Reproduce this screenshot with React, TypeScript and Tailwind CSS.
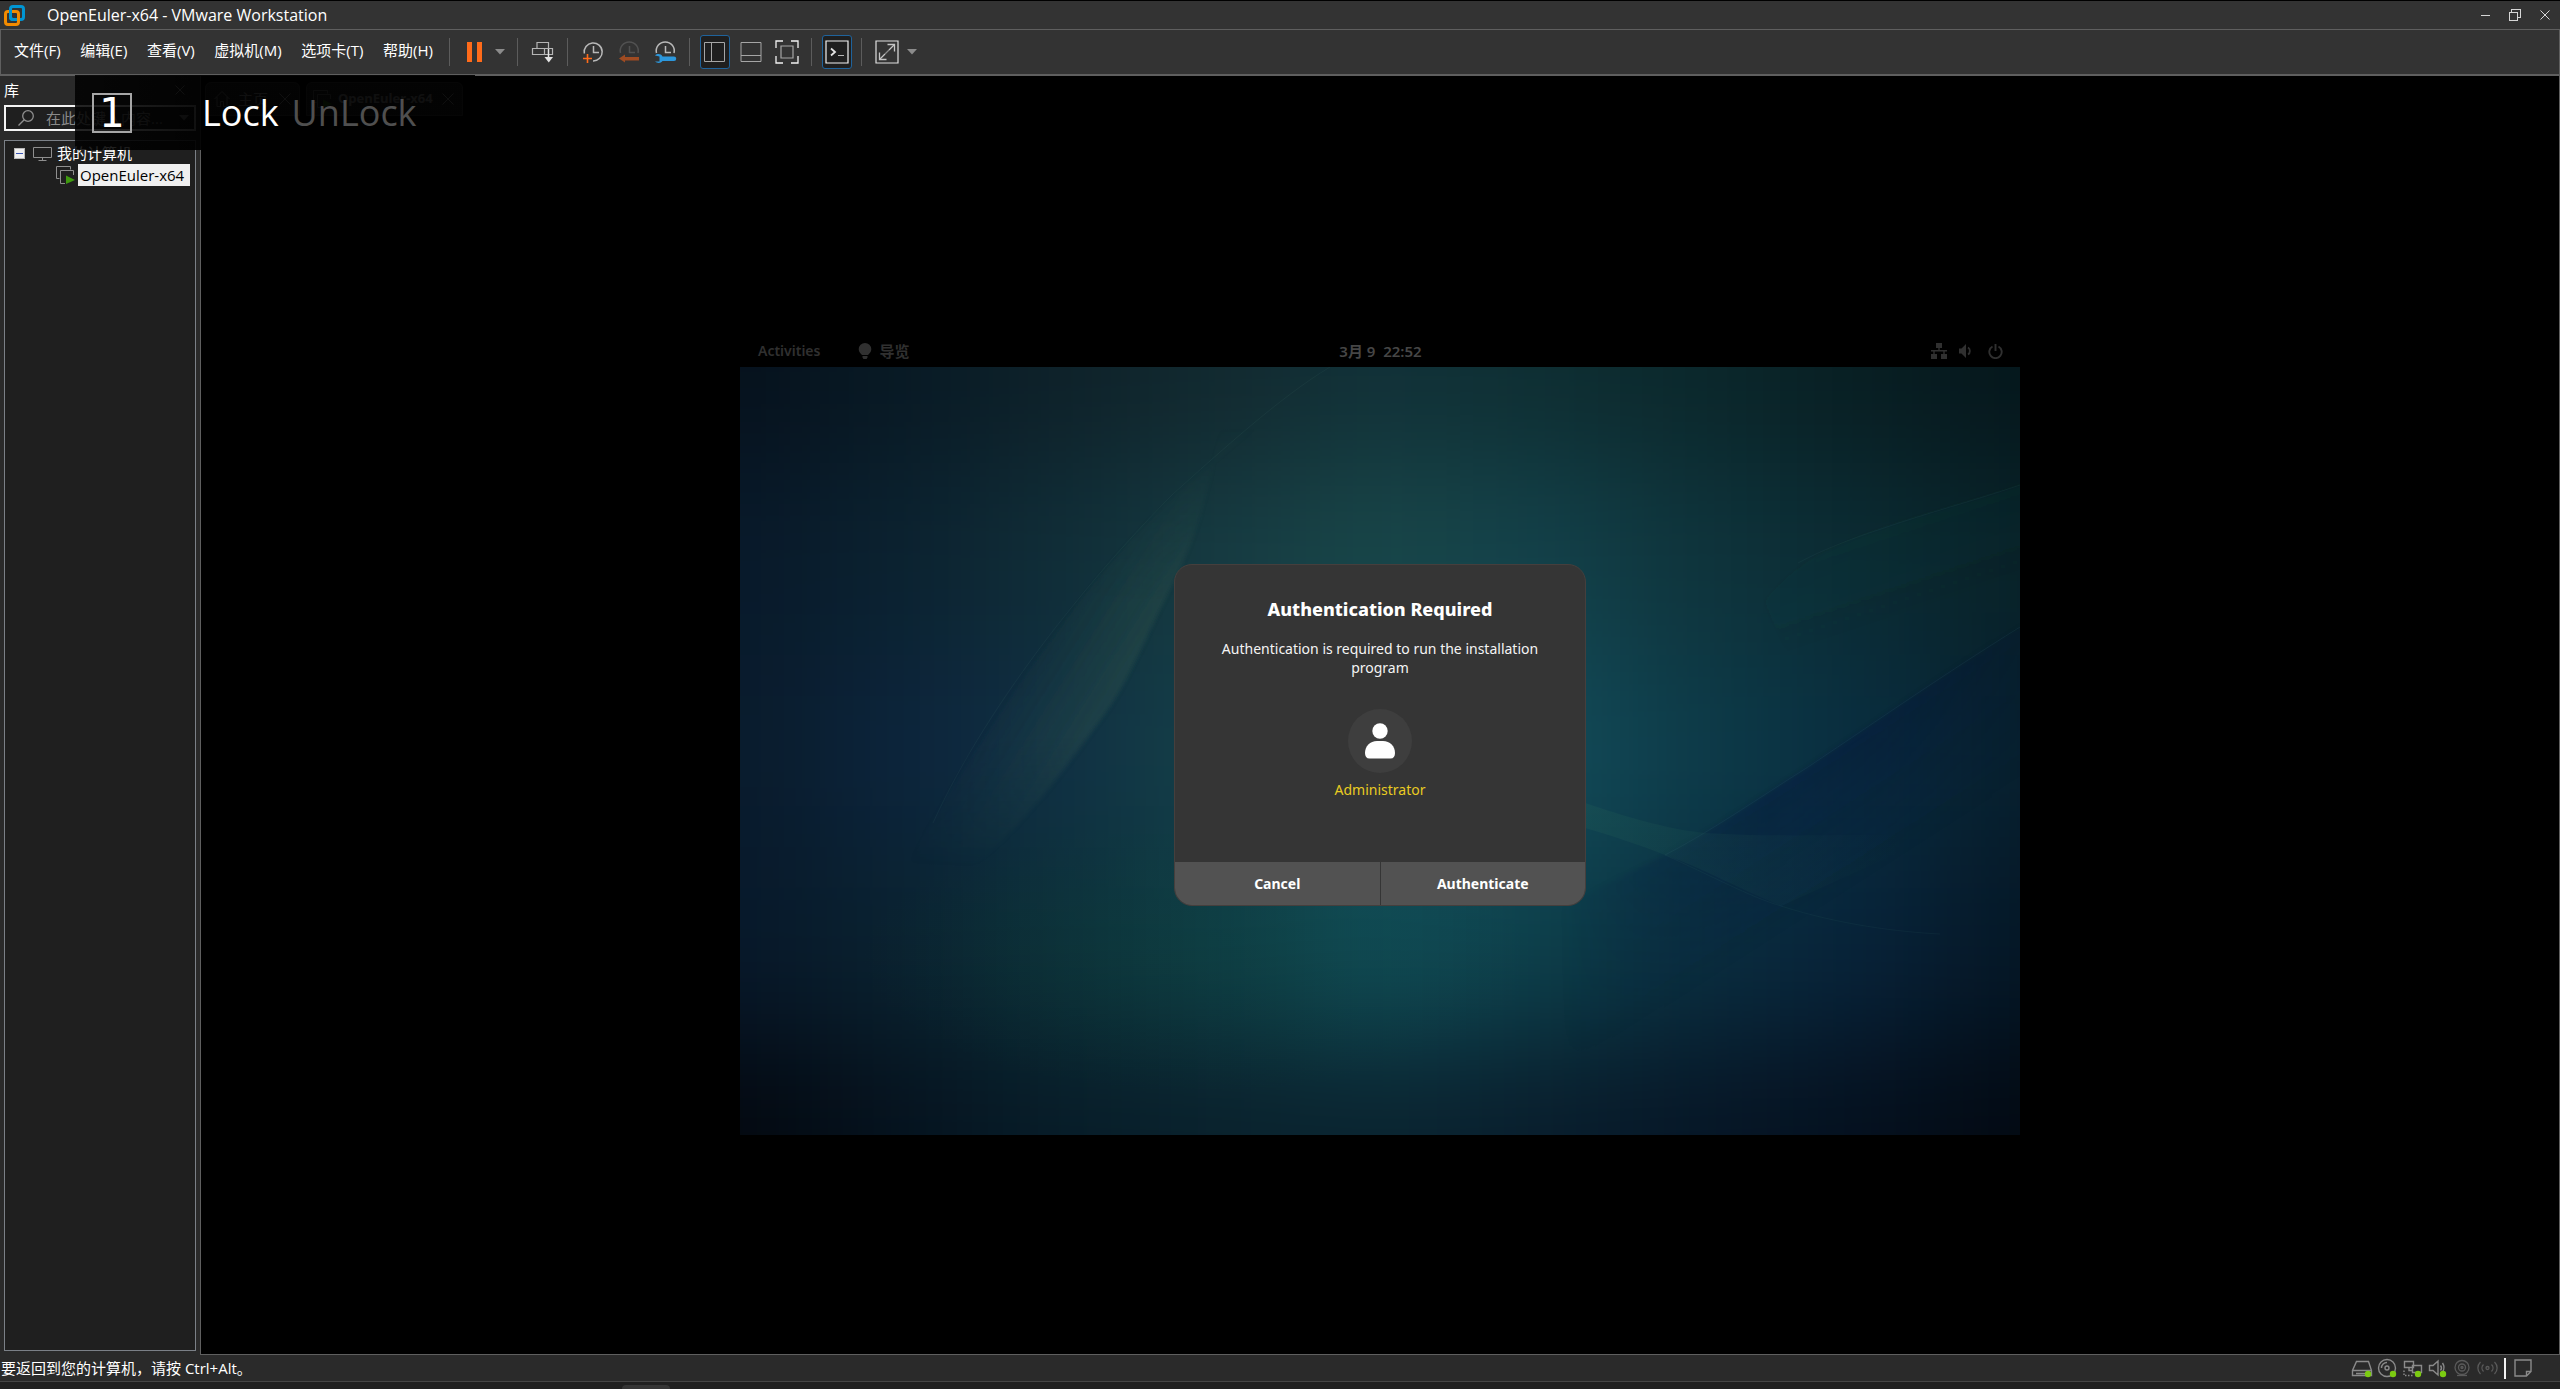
import React from "react";

const UI_FONT = "font-['Open_Sans','Noto_Sans_CJK_SC',sans-serif]";

/* ---------- window chrome ---------- */

function VmwareLogo() {
  return (
    <svg className="size-6 shrink-0" viewBox="0 0 24 24" fill="none" aria-hidden="true">
      <rect x="8.5" y="3.5" width="13" height="13" rx="2.5" stroke="#0095d3" strokeWidth="3" />
      <rect x="3.5" y="8.500" width="13" height="13" rx="2.5" stroke="#f38b00" strokeWidth="3" />
      <path d="M8.500 7v7a2.500 2.500 0 0 0 2.500 2.500h3" stroke="#0095d3" strokeWidth="3" />
    </svg>
  );
}

function TitleBar() {
  const control = "grid h-7 w-[30px] place-items-center text-[#d6d6d6]";
  return (
    <header className="flex h-[29px] shrink-0 items-center border-t border-black bg-[#333333] pl-[2px] pr-0">
      <VmwareLogo />
      <h1 className="ml-[21px] grow text-[16px] leading-6 text-white">OpenEuler-x64 - VMware Workstation</h1>
      <button type="button" aria-label="最小化" className={control}>
        <svg className="size-3" viewBox="0 0 12 12" stroke="currentColor" shapeRendering="crispEdges"><path d="M2 6.500h9" /></svg>
      </button>
      <button type="button" aria-label="向下还原" className={control}>
        <svg className="size-3" viewBox="0 0 12 12" fill="none" stroke="currentColor" shapeRendering="crispEdges">
          <path d="M.5 3.500h8v8h-8zM2.500 3V.5h9v8H9" />
        </svg>
      </button>
      <button type="button" aria-label="关闭" className={control}>
        <svg className="size-3" viewBox="0 0 12 12" stroke="currentColor"><path d="m1.500 1.500 9 9M10.500 1.500l-9 9" /></svg>
      </button>
    </header>
  );
}

const MENUS = ["文件(F)", "编辑(E)", "查看(V)", "虚拟机(M)", "选项卡(T)", "帮助(H)"];

function Sep() {
  return <span className="mx-[6px] h-7 w-0.5 shrink-0 border-l border-[#5c5c5c]" />;
}

function Tool({ label, active, children }: { label: string; active?: boolean; children: React.ReactNode }) {
  return (
    <button
      type="button"
      aria-label={label}
      aria-pressed={active}
      className={
        "mx-[3px] grid h-[34px] w-[30px] shrink-0 place-items-center rounded-[3px] border " +
        (active ? "border-[#1f639c] bg-[#1f1f1f]" : "border-transparent")
      }
    >
      <svg className="size-6" viewBox="0 0 24 24" fill="none" aria-hidden="true">
        {children}
      </svg>
    </button>
  );
}

function DropArrow({ label }: { label: string }) {
  return (
    <button type="button" aria-label={label} className="flex h-[34px] w-[18px] shrink-0 items-center pl-[2px]">
      <svg className="h-[6px] w-[10px]" viewBox="0 0 10 6" aria-hidden="true"><path d="M0 0h10L5 5.500z" fill="#8b8b8b" /></svg>
    </button>
  );
}

function MenuBar() {
  return (
    <div className="flex h-[47px] shrink-0 items-center border-x border-b-2 border-t border-[#5f5f5f] bg-[#333333]">
      <nav className="flex w-[442px] shrink-0 items-center justify-between pb-1 pl-[13px] pr-[10px] text-[15px] leading-6 text-white">
        {MENUS.map((m) => (
          <button type="button" key={m} className="whitespace-nowrap">{m}</button>
        ))}
      </nav>
      <Sep />
      <Tool label="挂起">
        <path d="M4 2h5v20H4zM14 2h5v20h-5z" fill="#ff6b1a" />
      </Tool>
      <DropArrow label="电源选项" />
      <Sep />
      <Tool label="发送 Ctrl+Alt+Del">
        <g stroke="#b5b5b5" strokeWidth="1.200">
          <path d="M6 2.500h11.500v6H6zM1.500 8.500h12v6h-12zM13.500 8.500h8v6h-8z" />
          <path d="M17.500 9v9" stroke="#e3e3e3" strokeWidth="1.500" />
          <path d="M13.500 17h8.500l-4.250 5.500z" fill="#e3e3e3" stroke="none" />
        </g>
      </Tool>
      <Sep />
      <Tool label="拍摄快照">
        <path d="M3.300 13.500A9 9 0 1 1 12 21" stroke="#b9b9b9" strokeWidth="1.500" />
        <path d="M12.500 6v6.500H18" stroke="#b9b9b9" strokeWidth="1.500" />
        <path d="M6.500 14v9M2 18.500h9" stroke="#ff6b1a" strokeWidth="1.600" />
      </Tool>
      <Tool label="恢复快照">
        <path d="M3.500 13A9 9 0 1 1 21 13" stroke="#515151" strokeWidth="1.500" />
        <path d="M12.500 6v6.500H18" stroke="#515151" strokeWidth="1.500" />
        <path d="M2 18.500 8 14.500v2.500h14v3.500H8V22.500z" fill="#9f4b22" />
      </Tool>
      <Tool label="管理快照">
        <path d="M3.500 13A9 9 0 1 1 21 13" stroke="#b9b9b9" strokeWidth="1.500" />
        <path d="M12.500 6v6.500H18" stroke="#b9b9b9" strokeWidth="1.500" />
        <path d="M2 15.500C4 13.500 8 13.500 9.500 16.500H21a2.200 2.200 0 0 1 0 4.500H9.500C8 23.500 4 23.500 2 21.500h4.500v-5z" fill="#2c97dc" />
      </Tool>
      <Sep />
      <Tool label="显示或隐藏库" active>
        <path d="M1.500 2.500h20v19h-20zM8.500 2.500v19" stroke="#a6a6a6" />
      </Tool>
      <Tool label="显示或隐藏缩略图栏">
        <path d="M2 2.500h20v19H2zM2 15.500h20" stroke="#a6a6a6" />
      </Tool>
      <Tool label="进入全屏模式">
        <path d="M1 8V1h7M16 1h7v7M23 16v7h-7M8 23H1v-7" stroke="#f2f2f2" strokeWidth="1.300" />
        <path d="M6 6h12v12H6z" stroke="#a6a6a6" strokeWidth="1.200" />
      </Tool>
      <Sep />
      <Tool label="控制台视图" active>
        <path d="M1 1h22v22H1z" stroke="#f2f2f2" strokeWidth="1.200" />
        <path d="m6 8.500 4 3.500-4 3.500" stroke="#e4e4e4" strokeWidth="1.800" />
        <path d="M13 15.500h6" stroke="#b5b5b5" />
      </Tool>
      <Sep />
      <Tool label="自由拉伸">
        <path d="M1 1h22v22H1z" stroke="#e0e0e0" strokeWidth="1.200" />
        <path d="m5 19 5-5M14 10l5-5" stroke="#c4c4c4" strokeWidth="1.300" />
        <path d="m10 14 4-4" stroke="#8a8a8a" strokeWidth="1.300" />
        <path d="M12.500 4.500h7v7M4.500 12.500v7h7" stroke="#c4c4c4" strokeWidth="1.300" />
      </Tool>
      <DropArrow label="拉伸选项" />
    </div>
  );
}

/* ---------- library ---------- */

function VmIcon({ className }: { className: string }) {
  return (
    <svg className={className} viewBox="0 0 19 18" fill="none" aria-hidden="true">
      <path d="M3.500 12.500h-3V.5h14v3" stroke="#8f8f8f" />
      <path d="M9 17.500H4.500v-13h13V9" stroke="#8f8f8f" />
      <path d="m10 9.500 9 4.500-9 4z" fill="#3f9a10" />
    </svg>
  );
}

function Library() {
  return (
    <aside className="flex w-[200px] shrink-0 flex-col bg-[#2a2a2a] pb-1 pl-1 pr-1 text-[15px] leading-[22px] text-white">
      <div className="flex h-[29px] shrink-0 items-center justify-between pb-[2px] pr-2">
        <h2>库</h2>
        <button type="button" aria-label="关闭库" className="grid size-4 place-items-center">
          <svg className="size-2.5" viewBox="0 0 10 10" stroke="#c8c8c8"><path d="m.5.5 9 9M9.500.5l-9 9" /></svg>
        </button>
      </div>
      <div className="flex h-[26px] shrink-0 items-center border-2 border-[#f4f4f4] bg-[#1f1f1f]">
        <svg className="ml-3 size-4 shrink-0" viewBox="0 0 16 16" fill="none" stroke="#8f8f8f" strokeWidth="1.300" aria-hidden="true">
          <circle cx="10" cy="6" r="5.300" />
          <path d="M6.200 9.800.5 15.500" />
        </svg>
        <input
          type="text"
          aria-label="在此处键入内容"
          placeholder="在此处键入内容..."
          className="ml-3 w-0 grow bg-transparent text-[15px] leading-5 text-white outline-none placeholder:text-[#8a8a8a]"
        />
        <button type="button" aria-label="搜索选项" className="grid size-5 place-items-center">
          <svg className="h-[6px] w-[10px]" viewBox="0 0 10 6"><path d="M0 0h10L5 5.500z" fill="#a8a8a8" /></svg>
        </button>
      </div>
      <ul className="mt-[9px] grow border border-[#7b8087] bg-[#1f1f1f] pt-[2px]">
        <li>
          <div className="flex h-[21px] items-center pl-[9px]">
            <button type="button" aria-label="折叠" className="grid h-[11px] w-[11px] place-items-center border border-[#b9b9b9] bg-[#f0f0f0]">
              <span className="block h-px w-[7px] bg-[#3a55b4]" />
            </button>
            <svg className="ml-2 h-[14px] w-[19px]" viewBox="0 0 19 14" fill="none" stroke="#8f8f8f" aria-hidden="true">
              <path d="M.5.5h18v10H.5zM9.500 10.500v2.500M5.500 13.500h8" />
            </svg>
            <span className="ml-[5px] pb-[2px]">我的计算机</span>
          </div>
          <ul>
            <li className="flex h-[22px] items-center pl-[51px]">
              <VmIcon className="h-[18px] w-[19px] shrink-0" />
              <button type="button" className="ml-[3px] h-[22px] whitespace-nowrap bg-[#f0f0f0] pl-[2px] pr-[6px] text-[15px] leading-[22px] text-black">
                OpenEuler-x64
              </button>
            </li>
          </ul>
        </li>
      </ul>
    </aside>
  );
}

/* ---------- lock indicator ---------- */

function LockOverlay() {
  return (
    <div className="absolute left-[75px] top-[-1px] flex h-[75px] w-[400px] items-center bg-linear-to-r from-black/85 via-black/93 via-30% to-black/93">
      <span className="ml-[17px] grid size-10 place-items-center border-2 border-[#a6a6a6] font-['DejaVu_Sans',sans-serif] text-[40px] leading-9 text-white">
        1
      </span>
      <span className="ml-[70px] text-[36px] leading-10 text-white">Lock</span>
      <span className="ml-[13px] text-[36px] leading-10 text-[#4f4f4f]">UnLock</span>
    </div>
  );
}

/* ---------- guest desktop ---------- */

const MESH = [
  ["#06111c", "#081924", "#0e2129", "#12292f", "#113138", "#0e2e32", "#0b272b", "#081e22", "#05161b"],
  ["#08192a", "#0b2230", "#102e38", "#163b42", "#194749", "#13414a", "#0e343c", "#0b2b33", "#082228"],
  ["#091b2c", "#0c243c", "#103044", "#154048", "#144c56", "#134c5a", "#0d3b49", "#092e40", "#071f2e"],
  ["#07182a", "#0a2230", "#0c3039", "#0d3c45", "#104c57", "#0d404b", "#0a2e40", "#07233a", "#051726"],
  ["#04080f", "#05121e", "#071c28", "#0a212c", "#0a2430", "#091d2c", "#061626", "#05101e", "#030912"],
];

function Wallpaper() {
  return (
    <svg className="absolute inset-0 size-full" viewBox="0 0 1280 768" preserveAspectRatio="none" aria-hidden="true">
      <defs>
        <filter id="mesh" x="-200" y="-200" width="1680" height="1168" filterUnits="userSpaceOnUse" colorInterpolationFilters="sRGB">
          <feGaussianBlur stdDeviation="62" />
        </filter>
        <filter id="soft" x="-10%" y="-10%" width="120%" height="120%">
          <feGaussianBlur stdDeviation="2" />
        </filter>
        <linearGradient id="leaf" gradientUnits="userSpaceOnUse" x1="385" y1="330" x2="290" y2="270">
          <stop offset="0" stopColor="#3a5f50" stopOpacity=".32" />
          <stop offset="1" stopColor="#3a5f50" stopOpacity="0" />
        </linearGradient>
        <linearGradient id="leafFade" gradientUnits="userSpaceOnUse" x1="0" y1="60" x2="0" y2="500">
          <stop offset="0" stopColor="#fff" stopOpacity="0" />
          <stop offset=".4" stopColor="#fff" />
          <stop offset=".7" stopColor="#fff" />
          <stop offset="1" stopColor="#fff" stopOpacity="0" />
        </linearGradient>
        <mask id="leafMask"><rect width="1280" height="768" fill="url(#leafFade)" /></mask>
        <linearGradient id="shade" gradientUnits="userSpaceOnUse" x1="1040" y1="413" x2="1110" y2="522">
          <stop offset="0" stopColor="#01163a" stopOpacity=".26" />
          <stop offset="1" stopColor="#01163a" stopOpacity="0" />
        </linearGradient>
        <linearGradient id="shadeFade" gradientUnits="userSpaceOnUse" x1="820" y1="0" x2="1280" y2="0">
          <stop offset="0" stopColor="#fff" stopOpacity="0" />
          <stop offset=".45" stopColor="#fff" />
          <stop offset=".7" stopColor="#fff" stopOpacity=".9" />
          <stop offset="1" stopColor="#fff" stopOpacity=".4" />
        </linearGradient>
        <mask id="shadeMask"><rect width="1280" height="768" fill="url(#shadeFade)" /></mask>
        <linearGradient id="band" gradientUnits="userSpaceOnUse" x1="840" y1="0" x2="1160" y2="0">
          <stop offset="0" stopColor="#2a6a58" stopOpacity=".2" />
          <stop offset="1" stopColor="#2a6a58" stopOpacity="0" />
        </linearGradient>
        <radialGradient id="green" gradientUnits="userSpaceOnUse" cx="460" cy="590" r="340" gradientTransform="matrix(1 0 0 .4 0 354)">
          <stop offset="0" stopColor="#12503c" stopOpacity=".16" />
          <stop offset="1" stopColor="#12503c" stopOpacity="0" />
        </radialGradient>
        <linearGradient id="arc" gradientUnits="userSpaceOnUse" x1="1150" y1="160" x2="1180" y2="250">
          <stop offset="0" stopColor="#1c4a44" stopOpacity=".1" />
          <stop offset="1" stopColor="#1c4a44" stopOpacity="0" />
        </linearGradient>
      </defs>
      <g filter="url(#mesh)">
        {MESH.map((row, r) =>
          row.map((fill, c) => {
            const left = c === 0 ? -200 : c * 160 - 80;
            const right = c === 8 ? 1480 : c * 160 + 80;
            const top = r === 0 ? -200 : r * 192 - 96;
            const bottom = r === 4 ? 968 : r * 192 + 96;
            return <rect key={`${r}-${c}`} x={left} y={top} width={right - left + 1} height={bottom - top + 1} fill={fill} />;
          }),
        )}
      </g>
      <path filter="url(#soft)" d="M490 0C480 80 462 160 433 216 410 260 390 312 366 345 330 395 290 450 240 495L120 590C190 440 300 280 363 206 410 150 470 90 600 0z" fill="url(#leaf)" mask="url(#leafMask)" />
      <path d="M590 0C540 30 480 85 433 127 360 200 250 330 193 456" stroke="#4a8078" strokeOpacity=".1" fill="none" />
      <ellipse cx="460" cy="590" rx="340" ry="136" fill="url(#green)" />
      <g mask="url(#shadeMask)">
        <path filter="url(#soft)" d="M1290 254C1200 310 1150 345 1068 400 1020 430 970 465 925 488L700 600 760 720 1290 720z" fill="url(#shade)" />
      </g>
      <path d="M1280 260C1200 310 1150 345 1068 400 1020 430 970 465 925 488" stroke="#4a8a98" strokeOpacity=".1" fill="none" />
      <path d="M845 436C880 448 930 463 965 466 1030 470 1080 468 1200 467L1041 539C1000 522 960 500 925 488 900 478 870 468 845 461z" fill="url(#band)" />
      <path d="M925 488C970 508 1010 530 1041 539 1100 558 1160 565 1200 567" stroke="#3a7a6c" strokeOpacity=".1" fill="none" />
      <path d="M1290 115C1230 135 1190 145 1141 162 1090 180 1050 200 1025 235L1100 420 1290 260z" fill="url(#arc)" filter="url(#soft)" />
      <path d="M1280 118C1230 135 1190 145 1141 162 1110 172 1080 184 1058 196" stroke="#3a6a6c" strokeOpacity=".12" fill="none" />
    </svg>
  );
}

function GuestTopBar() {
  return (
    <div className="grid h-8 grid-cols-3 items-center bg-black pl-[18px] pr-[17px] text-[14px] font-semibold leading-5 text-[#303030]">
      <div className="flex items-center">
        <button type="button">Activities</button>
        <button type="button" className="ml-[38px] flex items-center gap-[7px] text-[15px] font-bold">
          <svg className="h-4 w-[14px]" viewBox="0 0 14 16" fill="currentColor" aria-hidden="true">
            <path d="M7 0a6.300 6.300 0 0 1 6.300 6.300C13.300 9 11 11 10 12H4C3 11 .7 9 .7 6.300A6.300 6.300 0 0 1 7 0zM4.500 13h5v1.500L8.500 16h-3l-1-1.500z" />
          </svg>
          导览
        </button>
      </div>
      <time className="whitespace-pre text-center text-[15px] text-[#464646]">3月 9  22:52</time>
      <div className="flex items-center justify-end gap-3">
        <svg className="size-4" viewBox="0 0 16 16" fill="currentColor" aria-hidden="true">
          <path d="M5 0h6v5H8.700v2H16v1.500h-2.300V11H16v5h-6v-5h2.300V8.500H3.700V11H6v5H0v-5h2.300V8.500H0V7h7.300V5H5z" />
        </svg>
        <svg className="h-4 w-[13px]" viewBox="0 0 13 16" fill="none" aria-hidden="true">
          <path d="M0 5.500h2.500L7 1v14l-4.500-4.500H0z" fill="currentColor" />
          <path d="M9 4.500c2.500 1.500 2.500 5.500 0 7" stroke="currentColor" strokeWidth="1.800" />
        </svg>
        <svg className="ml-1 size-[15px]" viewBox="0 0 15 15" fill="none" stroke="currentColor" strokeWidth="1.900" aria-hidden="true">
          <path d="M4.500 2.500a6.200 6.200 0 1 0 6 0M7.500 0v7" />
        </svg>
      </div>
    </div>
  );
}

function AuthDialog() {
  return (
    <section
      role="dialog"
      aria-labelledby="auth-title"
      className="w-[412px] overflow-hidden rounded-[18px] border border-[#453f3d] bg-[#353535] text-center text-white"
    >
      <div className="flex h-[297px] flex-col items-center pt-8">
        <h2 id="auth-title" className="text-[18px] font-extrabold leading-6">Authentication Required</h2>
        <p className="mt-[18px] w-[330px] text-[14px] leading-[19px] text-[#f4f4f4]">
          Authentication is required to run the installation program
        </p>
        <span className="mt-8 grid size-16 shrink-0 place-items-center rounded-full bg-[#3e3e3e]">
          <svg className="h-9 w-[30px]" viewBox="0 0 30 36" fill="#fff" aria-hidden="true">
            <circle cx="15" cy="8" r="7.700" />
            <path d="M12 18h6c7 0 12 5 12 12 0 3.500-1.500 5.600-4.500 5.600h-21C1.500 35.600 0 33.500 0 30c0-7 5-12 12-12z" />
          </svg>
        </span>
        <span className="mt-[7px] text-[14px] leading-5 text-[#e9cb22]">Administrator</span>
      </div>
      <div className="grid h-[43px] grid-cols-2 gap-px text-[14px] font-bold">
        <button type="button" className="bg-[#525252]">Cancel</button>
        <button type="button" className="bg-[#525252]">Authenticate</button>
      </div>
    </section>
  );
}

function Guest() {
  return (
    <div className="flex h-[800px] w-[1280px] max-w-full flex-col font-['Noto_Sans','Noto_Sans_CJK_SC',sans-serif]">
      <GuestTopBar />
      <div className="relative flex grow justify-center overflow-hidden pt-[197px]">
        <Wallpaper />
        <div className="relative"><AuthDialog /></div>
      </div>
    </div>
  );
}

function TabStrip() {
  const tab = "flex h-[34px] items-center rounded-t-md border border-[#555555] bg-[#2e2e2e]";
  const cross = (
    <svg className="size-3" viewBox="0 0 12 12" stroke="#dddddd"><path d="m.5.5 11 11M11.500.5l-11 11" /></svg>
  );
  return (
    <div className="flex h-10 shrink-0 items-end gap-[6px] pl-1 text-[15px] text-[#dddddd]">
      <div className={tab + " w-[95px] gap-2 pl-2"}>
        <svg className="size-4" viewBox="0 0 16 16" fill="none" stroke="#bbbbbb"><path d="m.5 8 7.500-7.500L15.500 8M3 6v9.500h3.500v-5h3v5H13V6" /></svg>
        <span className="grow">主页</span>
        <button type="button" aria-label="关闭主页" className="mr-2">{cross}</button>
      </div>
      <div className={tab + " w-[157px] gap-[6px] pl-[6px] font-bold"}>
        <VmIcon className="h-[18px] w-[19px]" />
        <span className="grow whitespace-nowrap text-[13px]">OpenEuler-x64</span>
        <button type="button" aria-label="关闭 OpenEuler-x64" className="mr-2">{cross}</button>
      </div>
    </div>
  );
}

/* ---------- status bar ---------- */

function Dot({ x, y }: { x: number; y: number }) {
  return <circle cx={x} cy={y} r="3.200" fill="#7ccb12" />;
}

function Status({ label, children }: { label: string; children: React.ReactNode }) {
  return (
    <button type="button" aria-label={label} className="h-6 w-[25px] shrink-0">
      <svg className="h-6 w-[25px]" viewBox="0 0 25 24" fill="none" stroke="#8a8a8a" strokeWidth="1.400" aria-hidden="true">
        {children}
      </svg>
    </button>
  );
}

function StatusBar() {
  return (
    <footer className="flex h-[26px] shrink-0 items-center bg-[#2a2a2a] pl-px text-[15px] leading-6 text-white">
      <p className="grow whitespace-nowrap">要返回到您的计算机，请按 Ctrl+Alt。</p>
      <Status label="硬盘">
        <path d="M6.500 5.500h12l3 9v5h-19v-5zM2.500 14.500h19M6 17.500h9" />
        <g stroke="none"><Dot x={18} y={18} /></g>
      </Status>
      <Status label="CD/DVD">
        <circle cx="12" cy="12" r="8.500" />
        <circle cx="12" cy="12" r="2" />
        <path d="M6.500 12a5.500 5.500 0 0 1 5.500-5.500" />
        <g stroke="none"><Dot x={18} y={18} /></g>
      </Status>
      <Status label="网络适配器">
        <path d="M4.500 5.500h9v6h-9zM12.500 9.500h9v7h-9zM9 12v2.500h3" />
        <path d="M4 14.500v5h10" strokeDasharray="1.500 1.500" />
        <g stroke="none"><Dot x={18} y={18} /></g>
      </Status>
      <Status label="声卡">
        <path d="M4.500 9.500h3.500l5-4.500v14l-5-4.500H4.500zM15.500 9.500c1.200 1.500 1.200 3.500 0 5M17.500 7c2 3 2 6 0 9" />
        <g stroke="none"><Dot x={18} y={18} /></g>
      </Status>
      <Status label="摄像头">
        <g stroke="#5a5a5a" strokeWidth="1.300">
          <circle cx="12" cy="11.500" r="7" />
          <circle cx="12" cy="11.500" r="3.500" />
          <circle cx="12" cy="11.500" r="1" />
          <path d="M7 19.500h10" />
        </g>
      </Status>
      <Status label="无线">
        <g stroke="#5a5a5a" strokeWidth="1.300">
          <circle cx="12.500" cy="12" r="1.500" />
          <path d="M8.500 8.500c-2 2-2 5 0 7M16.500 8.500c2 2 2 5 0 7M5.500 6c-3.500 3.500-3.500 8.500 0 12M19.500 6c3.500 3.500 3.500 8.500 0 12" />
        </g>
      </Status>
      <span className="ml-1 mr-[7px] h-[21px] w-0.5 shrink-0 bg-[#f2f2f2]" />
      <button type="button" aria-label="消息日志" className="mr-[27px] grid h-6 w-[20px] shrink-0 place-items-center">
        <svg className="size-[18px]" viewBox="0 0 18 18" fill="none" stroke="#8a8a8a" strokeWidth="1.400" aria-hidden="true">
          <path d="M1 1h16v11.500L12.500 17H1zM17 12.500h-4.500V17" />
        </svg>
      </button>
    </footer>
  );
}

export default function App() {
  return (
    <div className={"flex h-screen flex-col overflow-hidden bg-black " + UI_FONT}>
      <TitleBar />
      <MenuBar />
      <div className="relative flex min-h-0 grow">
        <Library />
        <main className="flex min-w-0 grow flex-col border-b border-l border-r border-[#5f5f5f] bg-black">
          <TabStrip />
          <div className="flex min-h-0 grow items-center justify-center">
            <Guest />
          </div>
        </main>
        <LockOverlay />
      </div>
      <StatusBar />
      <div className="flex h-2 shrink-0 items-end border-t border-[#454545] bg-[#202020]">
        <span className="ml-[622px] h-1 w-12 rounded-t bg-[#353535]" />
      </div>
    </div>
  );
}
